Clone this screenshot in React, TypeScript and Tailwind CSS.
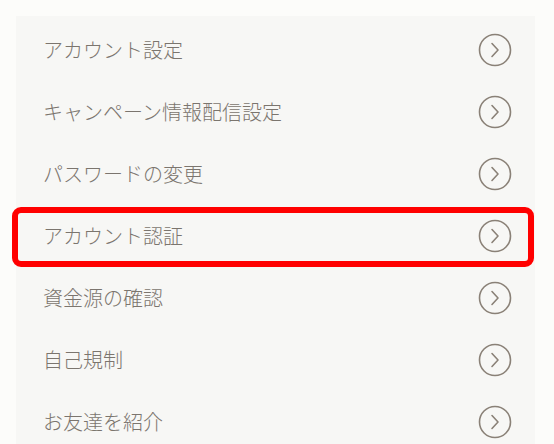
import React from "react";

const items = [
  "アカウント設定",
  "キャンペーン情報配信設定",
  "パスワードの変更",
  "アカウント認証",
  "資金源の確認",
  "自己規制",
  "お友達を紹介",
];

function Arrow() {
  return (
    <svg width="34" height="34" viewBox="0 0 34 34" fill="none">
      <circle cx="17" cy="17" r="15.5" stroke="#8a8177" strokeWidth="1.6" />
      <path d="M14 10.5 L20 17 L14 23.5" stroke="#8a8177" strokeWidth="1.6" strokeLinecap="round" strokeLinejoin="round" />
    </svg>
  );
}

export default function App() {
  return (
    <div
      className="h-[444px] w-[554px] overflow-hidden bg-[#fcfcfa] pl-4 pt-4"
      style={{ fontFamily: '"Noto Sans CJK JP", "Noto Sans", sans-serif' }}
    >
      <div className="w-[519px] bg-[#f7f7f5] pt-[3px] pb-4">
        {items.map((t, i) => (
          <div key={i} className="relative flex h-[62px] items-center justify-between pl-[27px] pr-[23px]">
            <span className="text-[20px] font-light leading-none text-[#7b756e]">{t}</span>
            <Arrow />
            {i === 3 && (
              <div className="pointer-events-none absolute left-[-4px] top-[2px] h-[60px] w-[522px] rounded-[9px] border-[6px] border-[#ff0000]" />
            )}
          </div>
        ))}
      </div>
    </div>
  );
}
